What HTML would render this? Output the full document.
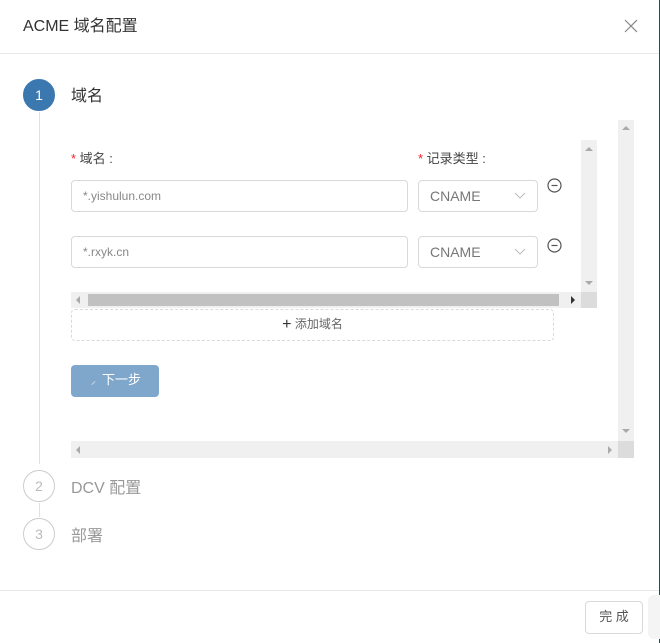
<!DOCTYPE html>
<html><head><meta charset="utf-8"><style>
*{box-sizing:border-box;margin:0;padding:0}
body{width:660px;height:643px;background:#fff;position:relative;overflow:hidden;font-family:"Liberation Sans","Noto Sans CJK SC",sans-serif;color:#333}
.a{position:absolute}
.inp{position:absolute;border:1px solid #d9d9d9;border-radius:4px;font-size:12px;color:#888;padding-left:11px;line-height:30px;height:32px}
.sel{position:absolute;border:1px solid #d9d9d9;border-radius:4px;font-size:14px;color:#777;padding-left:11px;line-height:30px;height:32px;width:120px}
.circ{position:absolute;width:32px;height:32px;border-radius:50%;text-align:center;line-height:30px;font-size:14px}
.tri{position:absolute;width:0;height:0}
</style></head><body>
<div class="a" style="left:23px;top:17px;font-size:16px;color:#333;line-height:20px">ACME 域名配置</div>
<svg class="a" style="left:624px;top:19px" width="14" height="14"><path d="M1 1L13 13M13 1L1 13" stroke="#888" stroke-width="1.2"/></svg>
<div class="a" style="left:0;top:53px;width:660px;height:1px;background:#e8e8e8"></div>
<div class="a" style="left:659px;top:0;width:1px;height:643px;background:#2d4a4a"></div>

<div class="circ" style="left:23px;top:79px;background:#3b78b0;color:#fff;border:1px solid #3b78b0">1</div>
<div class="a" style="left:71px;top:87px;font-size:16px;color:#333;line-height:20px">域名</div>
<div class="a" style="left:39px;top:112px;width:1px;height:352px;background:#e0e0e0"></div>
<div class="a" style="left:39px;top:503px;width:1px;height:14px;background:#e0e0e0"></div>
<div class="circ" style="left:23px;top:470px;border:1px solid #ccc;color:#bbb">2</div>
<div class="a" style="left:71px;top:479px;font-size:16px;color:#999;line-height:20px">DCV 配置</div>
<div class="circ" style="left:23px;top:518px;border:1px solid #ccc;color:#bbb">3</div>
<div class="a" style="left:71px;top:527px;font-size:16px;color:#999;line-height:20px">部署</div>

<div class="a" style="left:618px;top:120px;width:16px;height:338px;background:#f0f0f0"></div>
<div class="a" style="left:71px;top:441px;width:547px;height:17px;background:#f0f0f0"></div>
<div class="a" style="left:618px;top:441px;width:16px;height:17px;background:#dcdcdc"></div>
<div class="tri" style="left:622px;top:126px;border:4px solid transparent;border-bottom:4px solid #aaa;border-top:0"></div>
<div class="tri" style="left:622px;top:429px;border:4px solid transparent;border-top:4px solid #aaa;border-bottom:0"></div>
<div class="tri" style="left:76px;top:446px;border:4px solid transparent;border-right:4px solid #aaa;border-left:0"></div>
<div class="tri" style="left:608px;top:446px;border:4px solid transparent;border-left:4px solid #aaa;border-right:0"></div>

<div class="a" style="left:581px;top:140px;width:16px;height:152px;background:#f0f0f0"></div>
<div class="a" style="left:71px;top:292px;width:510px;height:16px;background:#f0f0f0"></div>
<div class="a" style="left:581px;top:292px;width:16px;height:16px;background:#dcdcdc"></div>
<div class="a" style="left:88px;top:294px;width:471px;height:12px;background:#c1c1c1"></div>
<div class="tri" style="left:585px;top:147px;border:4px solid transparent;border-bottom:4px solid #aaa;border-top:0"></div>
<div class="tri" style="left:585px;top:281px;border:4px solid transparent;border-top:4px solid #aaa;border-bottom:0"></div>
<div class="tri" style="left:76px;top:296px;border:4px solid transparent;border-right:4px solid #aaa;border-left:0"></div>
<div class="tri" style="left:571px;top:296px;border:4px solid transparent;border-left:4px solid #333;border-right:0"></div>

<div class="a" style="left:71px;top:150px;font-size:13px;color:#444;line-height:18px"><span style="color:#f5222d">*</span> 域名 :</div>
<div class="a" style="left:418px;top:150px;font-size:13px;color:#444;line-height:18px"><span style="color:#f5222d">*</span> 记录类型 :</div>
<div class="inp" style="left:71px;top:180px;width:337px">*.yishulun.com</div>
<div class="inp" style="left:71px;top:236px;width:337px">*.rxyk.cn</div>
<div class="sel" style="left:418px;top:180px">CNAME</div>
<div class="sel" style="left:418px;top:236px">CNAME</div>
<svg class="a" style="left:514px;top:192px" width="12" height="8"><path d="M1 1L6 6L11 1" stroke="#bbb" fill="none"/></svg>
<svg class="a" style="left:514px;top:248px" width="12" height="8"><path d="M1 1L6 6L11 1" stroke="#bbb" fill="none"/></svg>
<svg class="a" style="left:547px;top:178px" width="15" height="15"><circle cx="7.5" cy="7.5" r="6.5" stroke="#555" fill="none" stroke-width="1.2"/><path d="M4.5 7.5H10.5" stroke="#555" stroke-width="1.2"/></svg>
<svg class="a" style="left:547px;top:238px" width="15" height="15"><circle cx="7.5" cy="7.5" r="6.5" stroke="#555" fill="none" stroke-width="1.2"/><path d="M4.5 7.5H10.5" stroke="#555" stroke-width="1.2"/></svg>

<div class="a" style="left:71px;top:309px;width:483px;height:32px;border:1px dashed #d9d9d9;border-radius:4px;text-align:center;line-height:28px;font-size:12px;color:#666"><span style="font-size:16px;color:#333;vertical-align:-1px">+</span> 添加域名</div>

<div class="a" style="left:71px;top:365px;width:88px;height:32px;background:#7fa7cc;border-radius:4px;color:#fff;font-size:13px;line-height:30px;padding-left:20px"><span style="font-size:10px;margin-right:6px">⸝</span>下一步</div>

<div class="a" style="left:0;top:590px;width:659px;height:1px;background:#e8e8e8"></div>
<div class="a" style="left:585px;top:601px;width:58px;height:33px;border:1px solid #d9d9d9;border-radius:4px;text-align:center;line-height:29px;font-size:13px;color:#555">完 成</div>
<div class="a" style="left:648px;top:595px;width:12px;height:44px;background:#f4f4f4;border-radius:6px 0 0 6px"></div>
</body></html>
